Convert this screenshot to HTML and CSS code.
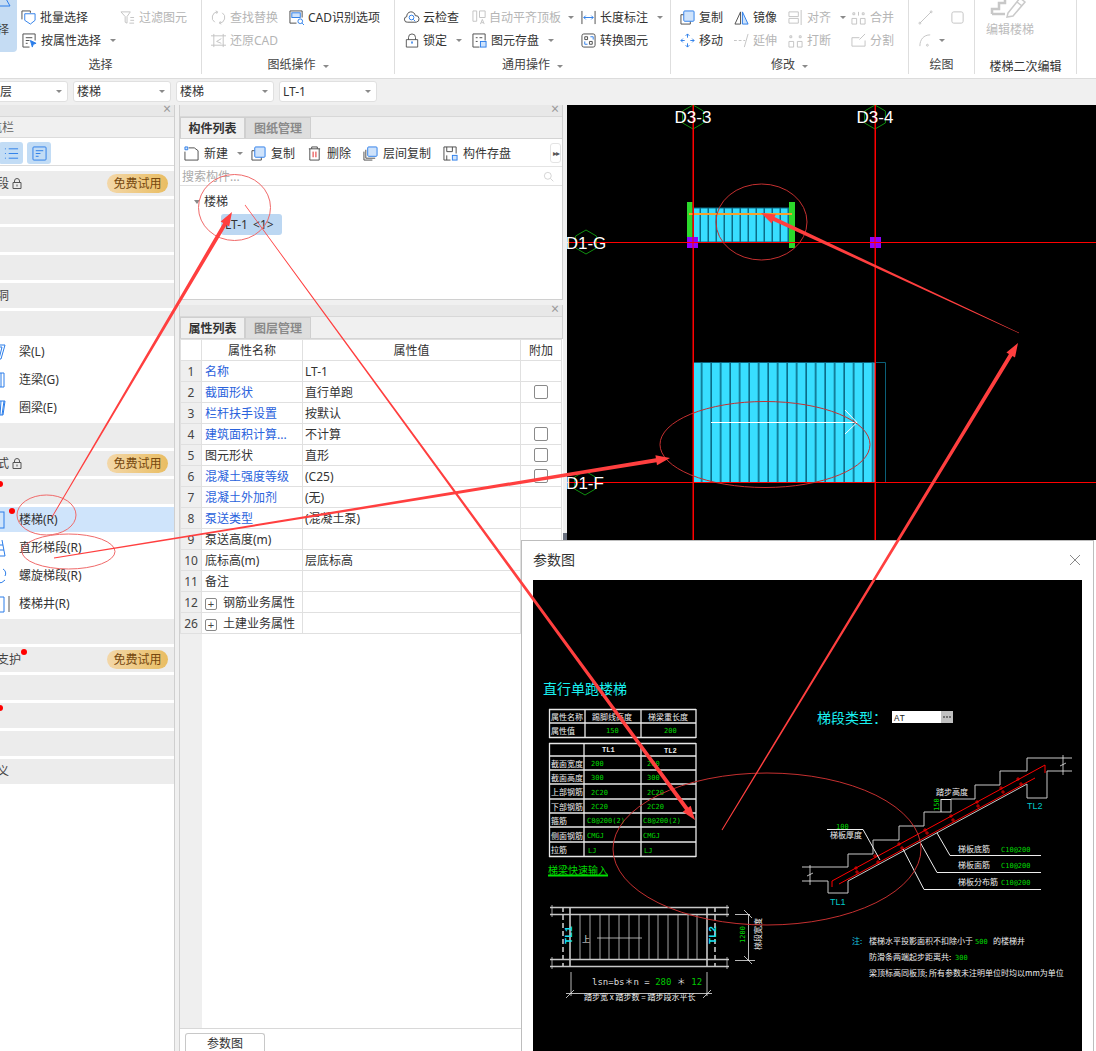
FILE: index.html
```html
<!DOCTYPE html>
<html lang="zh-CN">
<head>
<meta charset="utf-8">
<title>楼梯</title>
<link rel="stylesheet" href="styles.css">
</head>
<body>
<div class="page">

<header class="ribbon">
  <section class="rgroup rgroup--select">
    <div class="rgroup__tools">
      <div class="bigbtn">
        <svg class="bigbtn__ic" viewBox="0 0 24 24"><path class="b" d="M12 1L22 19H2z"/></svg>
        <span>选择</span>
      </div>
      <div class="grid grid--select">
        <div class="tool"><svg class="ic" viewBox="0 0 16 16"><path d="M1 10V1h9v2"/><path class="b" d="M4 4h11v7l-5 4-6-4z"/></svg><span>批量选择</span></div>
        <div class="tool tool--off"><svg class="ic" viewBox="0 0 16 16"><path class="g" d="M1 2h10L7.5 7v7l-2-1V7zM11 8h4M11 11h4M10 14h5"/></svg><span>过滤图元</span></div>
        <div class="tool tool--a2"><svg class="ic" viewBox="0 0 16 16"><path d="M14 8V1H1v14h7M4 5h7M4 8h4M4 11h2"/><path class="b fbs" d="M9 8l6 3-3 1-1 3z"/></svg><span>按属性选择</span><i class="caret"></i></div>
      </div>
    </div>
    <div class="rgroup__label">选择</div>
  </section>

  <section class="rgroup rgroup--cad">
    <div class="rgroup__tools">
      <div class="grid grid--cad">
        <div class="tool tool--off"><svg class="ic" viewBox="0 0 16 16"><path class="g" d="M4 13A6 6 0 0 1 7 2M12 3A6 6 0 0 1 9 14M5 1l2 1-1 2M11 15l-2-1 1-2"/></svg><span>查找替换</span></div>
        <div class="tool"><svg class="ic" viewBox="0 0 16 16"><path d="M8 14H1V1h13v7"/><rect class="bf" x="3" y="3" width="9" height="5"/><circle class="b" cx="12" cy="12" r="2.5"/><path class="b" d="M14 14l2 2"/></svg><span>CAD识别选项</span></div>
        <div class="tool tool--off"><svg class="ic" viewBox="0 0 16 16"><path class="g" d="M3 1v14M13 1v14M0 3h16M0 13h16M11 6L6 9l5 2"/></svg><span>还原CAD</span></div>
      </div>
    </div>
    <div class="rgroup__label">图纸操作<i class="caret"></i></div>
  </section>

  <section class="rgroup rgroup--general">
    <div class="rgroup__tools">
      <div class="grid grid--general">
        <div class="tool"><svg class="ic" viewBox="0 0 16 16"><path d="M4 13a3 3 0 0 1-1-6 4.500 4.500 0 0 1 9-1 3.500 3.500 0 0 1 1 7z"/><circle class="b" cx="8" cy="8" r="2.500"/><path class="b" d="M10 10l2 2"/></svg><span>云检查</span></div>
        <div class="tool tool--off tool--tight"><svg class="ic" viewBox="0 0 16 16"><path class="g" d="M1 1h4v11H1zM8 1h6v7H8zM9 15l2-5 2 5M10 13.500h2"/></svg><span>自动平齐顶板</span><i class="caret"></i></div>
        <div class="tool"><svg class="ic" viewBox="0 0 16 16"><path d="M1 1v14M15 1v14"/><path class="b" d="M3 8h10M5 6L3 8l2 2M11 6l2 2-2 2"/></svg><span>长度标注</span><i class="caret"></i></div>
        <div class="tool tool--a2"><svg class="ic ic--n" viewBox="0 0 16 16"><path d="M4 7V4.500a4 4 0 0 1 8 0V7M1.500 7h13v8.500h-13z"/><path class="b" d="M8 9v3M7 10h2"/></svg><span>锁定</span><i class="caret"></i></div>
        <div class="tool"><svg class="ic" viewBox="0 0 16 16"><path d="M14 8V1H1v14h7M4 5h2M8 5h3M4 9h2"/><rect class="bf" x="9" y="9" width="6" height="6"/></svg><span>图元存盘</span><i class="caret"></i></div>
        <div class="tool"><svg class="ic" viewBox="0 0 16 16"><rect x="1" y="1" width="14" height="14" rx="2"/><path d="M4 4h3v3H4zM9 9h3v3H9z"/><path class="b" d="M10 4h3v3M4 9v3h3"/></svg><span>转换图元</span></div>
      </div>
    </div>
    <div class="rgroup__label">通用操作<i class="caret"></i></div>
  </section>

  <section class="rgroup rgroup--edit">
    <div class="rgroup__tools">
      <div class="grid grid--edit">
        <div class="tool"><svg class="ic" viewBox="0 0 16 16"><path d="M4 5H1v10h10v-3"/><rect class="bf" x="4" y="1" width="11" height="11" rx="1"/></svg><span>复制</span></div>
        <div class="tool"><svg class="ic" viewBox="0 0 16 16"><path d="M7 2L1 15h6z"/><path class="bf" d="M9 2l6 13H9z"/></svg><span>镜像</span></div>
        <div class="tool tool--off"><svg class="ic" viewBox="0 0 16 16"><path class="g" d="M1 2h10v5H1zM1 9h10v5H1zM14 0v16"/></svg><span>对齐</span><i class="caret"></i></div>
        <div class="tool tool--off"><svg class="ic" viewBox="0 0 16 16"><path class="g" d="M1 9h5v6H1zM10 9h5v6h-5zM2 3h2v2H2zM12 3h2v2h-2zM8 2v4"/></svg><span>合并</span></div>
        <div class="tool"><svg class="ic" viewBox="0 0 16 16"><path class="b" d="M8 1v4M8 11v4M1 8h4M11 8h4M6 3l2-2 2 2M6 13l2 2 2-2M3 6L1 8l2 2M13 6l2 2-2 2"/></svg><span>移动</span></div>
        <div class="tool tool--off"><svg class="ic" viewBox="0 0 16 16"><path class="g" d="M0 8h3M5 8h3M10 8h2M11 15l4-14"/></svg><span>延伸</span></div>
        <div class="tool tool--off"><svg class="ic" viewBox="0 0 16 16"><path class="g" d="M1 9h5v6H1zM10 9h5v6h-5zM2 3h2v2H2zM12 3h2v2h-2z"/></svg><span>打断</span></div>
        <div class="tool tool--off"><svg class="ic" viewBox="0 0 16 16"><path class="g" d="M15 8v6H1V5h8M15 1l-6 6"/></svg><span>分割</span></div>
      </div>
    </div>
    <div class="rgroup__label">修改<i class="caret"></i></div>
  </section>

  <section class="rgroup rgroup--draw">
    <div class="rgroup__tools">
      <div class="grid grid--draw">
        <div class="tool tool--off"><svg class="ic" viewBox="0 0 16 16"><path class="g" d="M2 14L14 2"/><circle class="g" cx="2" cy="14" r="1"/><circle class="g" cx="14" cy="2" r="1"/></svg></div>
        <div class="tool tool--off"><svg class="ic" viewBox="0 0 16 16"><rect class="g" x="2" y="2" width="12" height="12" rx="2"/></svg></div>
        <div class="tool tool--off tool--wide"><svg class="ic" viewBox="0 0 16 16"><path class="g" d="M2 14C2 7 6 2 13 2"/><circle class="g" cx="10" cy="13" r="1"/></svg><i class="caret"></i></div>
      </div>
    </div>
    <div class="rgroup__label">绘图</div>
  </section>

  <section class="rgroup rgroup--stair">
    <div class="stair2">
      <svg class="stair2__ic" viewBox="0 0 38 20"><path class="g g2" d="M1 14V9h7V3h6V-2"/><path class="g g2" d="M1 14h13"/><path class="g g1" d="M17 13L29 -2l5 4-12 14-6 1zM26 2l5 4"/></svg>
      <span>编辑楼梯</span>
    </div>
    <div class="rgroup__label rgroup__label--dark">楼梯二次编辑</div>
  </section>
</header>

<nav class="combos">
  <div class="combo combo--first"><span>首层</span><i class="caret"></i></div>
  <div class="combo"><span>楼梯</span><i class="caret"></i></div>
  <div class="combo"><span>楼梯</span><i class="caret"></i></div>
  <div class="combo"><span>LT-1</span><i class="caret"></i></div>
</nav>

<main class="main">
  <aside class="nav">
    <div class="titlebar"><span class="x">×</span></div>
    <div class="nav__head">导航栏</div>
    <div class="nav__tools">
      <div class="tbtn"><svg class="ic" viewBox="0 0 16 16"><path class="b" d="M5 3h10M5 8h10M5 13h10M1 3h1M1 8h1M1 13h1"/></svg></div>
      <div class="tbtn"><svg class="ic" viewBox="0 0 16 16"><rect class="b" x="1" y="1" width="14" height="14" rx="1"/><path class="b" d="M4 5h8M4 8h5M4 11h3"/></svg></div>
    </div>
    <ul class="navlist">
      <li class="sec"><span>施工段</span><svg class="lock" viewBox="0 0 10 11"><path d="M2.500 4.500V3a2.500 2.500 0 0 1 5 0v1.500M1 4.500h8v6H1z"/><path d="M5 6.500v2"/></svg><b class="free">免费试用</b></li>
      <li class="sec"><span>轴线</span></li>
      <li class="sec"><span>柱</span></li>
      <li class="sec"><span>墙</span></li>
      <li class="sec"><span>门窗洞</span></li>
      <li class="sec"><span>梁</span></li>
      <li class="item"><svg class="item__ic" viewBox="0 0 18 18"><path class="b" d="M2 2h15l-4 14h-2l3-12H2"/></svg>梁(L)</li>
      <li class="item"><svg class="item__ic" viewBox="0 0 18 18"><path class="b" d="M2 2h14v14H2M13 2v14"/></svg>连梁(G)</li>
      <li class="item"><svg class="item__ic" viewBox="0 0 18 18"><path class="b" d="M2 2h15l-2 14H2M13 2l-1 14M16 2l-2 14"/></svg>圈梁(E)</li>
      <li class="sec"><span>板</span></li>
      <li class="sec"><span>装配式</span><svg class="lock" viewBox="0 0 10 11"><path d="M2.500 4.500V3a2.500 2.500 0 0 1 5 0v1.500M1 4.500h8v6H1z"/><path d="M5 6.500v2"/></svg><b class="free">免费试用</b></li>
      <li class="sec"><span>楼梯</span><i class="dot dot--a"></i></li>
      <li class="item item--on"><svg class="item__ic" viewBox="0 0 18 18"><rect class="b" x="1" y="1" width="15" height="16"/></svg>楼梯(R)<i class="dot dot--b"></i></li>
      <li class="item"><svg class="item__ic" viewBox="0 0 18 18"><path class="b" d="M14 1l3 16H1M15 6H8M16 11H6"/></svg>直形梯段(R)</li>
      <li class="item"><svg class="item__ic" viewBox="0 0 18 18"><path class="b" d="M15 2a5 5 0 0 1 2 7M17 13a8 8 0 0 1-7 3"/></svg>螺旋梯段(R)</li>
      <li class="item"><svg class="item__ic" viewBox="0 0 18 18"><path class="b" d="M2 2h14v15H2z"/><path class="d" d="M21 1v16"/></svg>楼梯井(R)</li>
      <li class="sec"><span>装修</span></li>
      <li class="sec"><span>基坑支护</span><i class="dot dot--c"></i><b class="free">免费试用</b></li>
      <li class="sec"><span>土方</span></li>
      <li class="sec"><span>基础</span><i class="dot dot--a"></i></li>
      <li class="sec"><span>其它</span></li>
      <li class="sec"><span>自定义</span></li>
    </ul>
  </aside>

  <div class="center">
    <section class="panel panel--list">
      <div class="titlebar"><span class="x">×</span></div>
      <div class="tabs"><div class="tab tab--on">构件列表</div><div class="tab">图纸管理</div></div>
      <div class="ptools">
        <div class="ptool"><svg class="ic" viewBox="0 0 16 16"><path d="M5 2h6l4 3v10H1V6"/><path class="bf" d="M1 1h3v3H1z"/></svg><span>新建</span><i class="caret"></i></div>
        <div class="ptool"><svg class="ic" viewBox="0 0 16 16"><path d="M4 5H1v10h10v-3"/><rect class="bf" x="4" y="1" width="11" height="11" rx="1"/></svg><span>复制</span></div>
        <div class="ptool"><svg class="ic" viewBox="0 0 16 16"><path d="M2 3h12M5 3V1h6v2M3 3v12h10V3"/><path class="r" d="M6.500 6v6M9.500 6v6"/></svg><span>删除</span></div>
        <div class="ptool"><svg class="ic" viewBox="0 0 16 16"><path d="M1 6v9h9M3 4v9h10"/><rect class="bf" x="5" y="1" width="10" height="10" rx="1"/></svg><span>层间复制</span></div>
        <div class="ptool"><svg class="ic" viewBox="0 0 16 16"><path d="M8 15H1V1h13v7M4 1v5h6V1M4 15v-5"/><rect class="bf" x="10" y="10" width="5" height="5"/></svg><span>构件存盘</span></div>
        <div class="more">▸▸</div>
      </div>
      <div class="search"><span>搜索构件...</span><svg class="ic ic--s" viewBox="0 0 16 16"><circle class="g" cx="7" cy="7" r="5"/><path class="g" d="M11 11l4 4"/></svg></div>
      <div class="tree">
        <div class="tree__root"><i class="tree__arrow"></i>楼梯</div>
        <div class="chip">LT-1 &lt;1&gt;</div>
      </div>
    </section>

    <section class="panel panel--props">
      <div class="titlebar"><span class="x">×</span></div>
      <div class="tabs"><div class="tab tab--on">属性列表</div><div class="tab">图层管理</div></div>
      <div class="propwrap">
        <table class="props">
          <colgroup><col class="c1"><col class="c2"><col class="c3"><col class="c4"></colgroup>
          <thead><tr><th></th><th>属性名称</th><th>属性值</th><th>附加</th></tr></thead>
          <tbody>
            <tr><td class="n">1</td><td class="l">名称</td><td>LT-1</td><td></td></tr>
            <tr><td class="n">2</td><td class="l">截面形状</td><td>直行单跑</td><td class="k"><i class="check"></i></td></tr>
            <tr><td class="n">3</td><td class="l">栏杆扶手设置</td><td>按默认</td><td></td></tr>
            <tr><td class="n">4</td><td class="l">建筑面积计算...</td><td>不计算</td><td class="k"><i class="check"></i></td></tr>
            <tr><td class="n">5</td><td>图元形状</td><td>直形</td><td class="k"><i class="check"></i></td></tr>
            <tr><td class="n">6</td><td class="l">混凝土强度等级</td><td>(C25)</td><td class="k"><i class="check"></i></td></tr>
            <tr><td class="n">7</td><td class="l">混凝土外加剂</td><td>(无)</td><td></td></tr>
            <tr><td class="n">8</td><td class="l">泵送类型</td><td>(混凝土泵)</td><td></td></tr>
            <tr><td class="n">9</td><td>泵送高度(m)</td><td></td><td></td></tr>
            <tr><td class="n">10</td><td>底标高(m)</td><td>层底标高</td><td></td></tr>
            <tr><td class="n">11</td><td>备注</td><td></td><td></td></tr>
            <tr><td class="n">12</td><td><i class="plus">+</i>钢筋业务属性</td><td></td><td></td></tr>
            <tr><td class="n">26</td><td><i class="plus">+</i>土建业务属性</td><td></td><td></td></tr>
          </tbody>
        </table>
      </div>
      <div class="btabs"><div class="btab">参数图</div></div>
    </section>
  </div>

  <div class="canvas">
    <svg class="cad" viewBox="567 105 529 435" width="529" height="435">
      <defs>
        <pattern id="treadS" x="693" y="0" width="8" height="10" patternUnits="userSpaceOnUse"><rect width="8" height="10" fill="#38deff"/><rect x="6.500" width="1.500" height="10" fill="#0a6c88"/></pattern>
        <pattern id="treadB" x="693" y="0" width="9.500" height="10" patternUnits="userSpaceOnUse"><rect width="9.500" height="10" fill="#38deff"/><rect x="7.900" width="1.600" height="10" fill="#0a6c88"/></pattern>
        <polygon id="hex" points="0,-12 10.400,-6 10.400,6 0,12 -10.400,6 -10.400,-6"/>
      </defs>
      <g class="hexes">
        <use href="#hex" x="693" y="117"/><use href="#hex" x="875" y="117"/><use href="#hex" x="586" y="242"/><use href="#hex" x="585" y="483"/>
      </g>
      <rect x="693" y="208" width="96" height="34" fill="url(#treadS)" stroke="#0a6c88"/>
      <rect x="693" y="362" width="182" height="120" fill="url(#treadB)"/>
      <path d="M693 362.500H885.500V482" fill="none" stroke="#0b5f78"/>
      <rect x="687" y="202" width="5.500" height="46" fill="#2bd92b"/>
      <rect x="789" y="202" width="6" height="46" fill="#2bd92b"/>
      <path d="M689 214H792" stroke="#f5a02c" stroke-width="2"/>
      <path d="M711 422.500H857M845 410L857 422.500L845 434" fill="none" stroke="#fff" stroke-width="1"/>
      <rect x="692.500" y="105" width="1.500" height="435" fill="#f00"/>
      <rect x="874.500" y="105" width="1.500" height="435" fill="#f00"/>
      <rect x="567" y="242" width="529" height="1" fill="#f00"/>
      <rect x="567" y="482" width="529" height="1" fill="#f00"/>
      <rect x="687" y="237" width="11" height="11" fill="#9000ff"/><rect x="870" y="237" width="11" height="11" fill="#9000ff"/>
      <path d="M693 237V248M875 237V248M687 242.500H698M870 242.500H881" stroke="#f00"/>
      <text class="axis" x="693" y="123" text-anchor="middle">D3-3</text>
      <text class="axis" x="875" y="123" text-anchor="middle">D3-4</text>
      <text class="axis" x="586" y="249" text-anchor="middle">D1-G</text>
      <text class="axis" x="585" y="489" text-anchor="middle">D1-F</text>
    </svg>
  </div>
</main>

<div class="thumb"></div>

<section class="dialog">
  <header class="dialog__head"><span>参数图</span><svg class="dialog__x" viewBox="0 0 12 12"><path d="M1 1l10 10M11 1L1 11"/></svg></header>
  <svg class="param" viewBox="533 580 549 471" width="549" height="471">
    <text class="ttl" x="543" y="694">直行单跑楼梯</text>

    <g class="tb">
      <path d="M549 709.500H696M549 723H696M549 737.500H696M549.500 709V738M585 709V738M641 709V738M696 709V738"/>
      <path d="M549 743.500H696M549 756H696M549 770H696M549 784H696M549 799H696M549 813H696M549 827H696M549 842H696M549 856.500H696M549.500 743V857M584 743V857M641 743V857M696 743V857"/>
    </g>
    <g class="cw">
      <text x="551" y="720">属性名称</text><text x="592" y="720">踢脚线高度</text><text x="648" y="720">梯梁重长度</text>
      <text x="551" y="734">属性值</text>
      <text x="551" y="767">截面宽度</text><text x="551" y="781">截面高度</text><text x="551" y="795">上部钢筋</text><text x="551" y="810">下部钢筋</text><text x="551" y="824">箍筋</text><text x="551" y="839">侧面钢筋</text><text x="551" y="853">拉筋</text>
    </g>
    <g class="mw"><text x="602" y="752">TL1</text><text x="664" y="753">TL2</text></g>
    <g class="mg">
      <text x="606" y="733">150</text><text x="664" y="733">200</text>
      <text x="591" y="766">200</text><text x="647" y="766">200</text>
      <text x="591" y="780">300</text><text x="647" y="780">300</text>
      <text x="591" y="795">2C20</text><text x="647" y="795">2C20</text>
      <text x="591" y="809">2C20</text><text x="647" y="809">2C20</text>
      <text x="587" y="823">C8@200(2)</text><text x="643" y="823">C8@200(2)</text>
      <text x="587" y="838">CMGJ</text><text x="643" y="838">CMGJ</text>
      <text x="588" y="853">LJ</text><text x="644" y="853">LJ</text>
    </g>
    <text class="link" x="548" y="874">梯梁快速输入</text>
    <path d="M548 875.500H608" stroke="#00e000" stroke-width="2"/>

    <g class="pl">
      <path d="M550 907.500H729M550 914.500H729M550 959.500H729M550 966.500H729M570 907V967M707 907V967"/>
      <path stroke-dasharray="5 3" d="M563 907V967M715 907V967"/>
    </g>
    <path class="thin" d="M580 914V959M590 914V959M600 914V959M609 914V959M619 914V959M629 914V959M639 914V959M649 914V959M658 914V959M668 914V959M678 914V959M688 914V959M697 914V959M597 938H642M552 905V917M727 905V917M552 957V969M727 957V969"/>
    <g class="thin2"><path d="M735 914.500H750M735 960.500H755M748.500 914V961M744 910l8 8M744 956l8 8M571 972V996M707 972V996M566 993.500H712M566 998l8-8M703 998l8-8"/></g>
    <text class="cw1" x="582" y="942">上</text>
    <text class="tl" transform="translate(572 944) rotate(-90)">TL1</text>
    <text class="tl" transform="translate(716 944) rotate(-90)">TL2</text>
    <text class="mg mg1" transform="translate(745 943) rotate(-90)">1200</text>
    <text class="cw1" transform="translate(761 950) rotate(-90)">梯段宽度</text>
    <text class="formula" x="592" y="985">lsn=bs＊n = <tspan class="fg">280</tspan> ＊ <tspan class="fg">12</tspan></text>
    <text class="cw1" x="584" y="1000">踏步宽 x 踏步数 = 踏步段水平长</text>

    <text class="ttl" x="817" y="723">梯段类型：</text>
    <rect x="892" y="711" width="61" height="12" fill="#fff"/>
    <rect x="941" y="711" width="12" height="12" fill="#c0c0c0"/>
    <text class="mono" x="894" y="721">AT</text>
    <path d="M943.500 717h1M946.500 717h1M949.500 717h1" stroke="#222" stroke-width="2"/>

    <path class="stairline" d="M802 867H848V854H873V840H899V826H924V812H951V799H975V785H1000V771H1027V758H1072M802 881H828V893H848V881L1027 784V798H1047V771H1072"/>
    <path class="thin2" d="M810 865V885M1063 755V775M807 876l6-3M1060 766l6-3"/>
    <path class="rebar" d="M832 887V881L1045 765V773M839 884L1035 778"/>
    <path class="rebar rebar--s" d="M854 868h4M856 866v4M873 856h4M875 854v4M897 844h4M899 842v4M923 830h4M925 828v4M949 816h4M951 814v4M975 802h4M977 800v4M999 788h4M1001 786v4M1016 779h4M1018 777v4M855 872h4M857 870v4M876 862h4M878 860v4M900 848h4M902 846v4M925 833h4M927 831v4M951 820h4M953 818v4M976 806h4M978 804v4M1001 792h4M1003 790v4M1019 784h4M1021 782v4"/>
    <path class="lead" d="M827 829.500H863L880 860M937 833L950 855.500H1041M920 842L937 872.500H1041M903 849L924 889.500H1041M941 799.500H951M941 799V812"/>
    <g class="cw">
      <text x="936" y="795">踏步高度</text><text x="830" y="838">梯板厚度</text>
      <text x="958" y="852">梯板底筋</text><text x="958" y="868">梯板面筋</text><text x="958" y="885">梯板分布筋</text>
      <text x="869" y="944">楼梯水平投影面积不扣除小于</text><text x="993" y="944">的楼梯井</text>
      <text x="869" y="960">防滑条两端起步距离共:</text>
      <text x="869" y="976">梁顶标高同板顶;  所有参数未注明单位时均以mm为单位</text>
    </g>
    <g class="mg">
      <text x="836" y="829">100</text>
      <text transform="translate(939 811) rotate(-90)">150</text>
      <text x="1001" y="852">C10@200</text><text x="1001" y="868">C10@200</text><text x="1001" y="885">C10@200</text>
      <text x="975" y="944">500</text><text x="955" y="960">300</text>
    </g>
    <g class="tlc"><text x="830" y="905">TL1</text><text x="1027" y="809">TL2</text></g>
    <text class="note" x="852" y="944">注:</text>
  </svg>
</section>

<svg class="marks" viewBox="0 0 1096 1051" width="1096" height="1051" aria-hidden="true">
  <g class="rings">
    <ellipse cx="234.500" cy="207.500" rx="36" ry="33"/>
    <ellipse cx="46.500" cy="515" rx="29.500" ry="20"/>
    <ellipse cx="68.500" cy="551.500" rx="46.500" ry="17.500"/>
    <ellipse class="dark" cx="761.500" cy="222" rx="45.500" ry="38"/>
    <ellipse class="dark" cx="765" cy="444.500" rx="105" ry="43"/>
    <ellipse class="dark" cx="767" cy="849" rx="154" ry="76"/>
  </g>
  <g class="arrows">
    <polygon points="52.340,517.200 226.600,225.070 229.200,226.600 232,212 220.600,221.500 223.200,223.030 51.660,516.800"/>
    <polygon points="54.060,558.390 656.500,462.200 657,465.200 670,458 655.400,455.300 655.900,458.300 53.940,557.600"/>
    <polygon points="244.760,205.180 685.100,809.900 682.700,811.650 695,820 690.700,805.750 688.300,807.500 245.240,204.820"/>
    <polygon points="722.430,830.260 1012.400,356 1015,357.600 1018,343 1006.400,352.400 1009,354 721.570,829.740"/>
    <polygon points="1019.080,332.820 774.500,217.100 775.800,214.400 761,213 771.600,223.400 772.900,220.700 1018.920,333.180"/>
  </g>
</svg>

</div>
</body>
</html>
```

FILE: styles.css
```css
* { box-sizing: border-box; }
html, body { margin: 0; padding: 0; }
body { background: #f0f0f0; }
.page {
  position: relative;
  width: 1096px;
  height: 1051px;
  overflow: hidden;
  background: #f0f0f0;
  color: #333;
  font: 12px/18px "Noto Sans", "Noto Sans CJK SC", sans-serif;
}
ul { list-style: none; margin: 0; padding: 0; }

/* shared icon strokes */
.ic { width: 15px; height: 15px; flex: none; fill: none; stroke: #4a4a4a; stroke-width: 1; overflow: visible; }
.ic--n { width: 14px; }
.ic--s { width: 11px; height: 11px; }
.b { fill: none; stroke: #2b7de9; stroke-width: 1; }
.g { fill: none; stroke: #c2c2c2; stroke-width: 1; }
.g1 { stroke-width: 1.500; stroke: #cacaca; }
.g2 { stroke-width: 2.500; stroke: #c8c8c8; }
.d { stroke: #555; fill: none; }
.r { stroke: #e02020; fill: none; }
.bf { fill: #cfe3fb; stroke: #2b7de9; stroke-width: 1; }
.fbs { fill: #2b7de9; }
.caret {
  display: inline-block;
  width: 0;
  height: 0;
  margin-left: 6px;
  border-style: solid;
  border-width: 3px 3px 0;
  border-color: #8a8a8a transparent transparent;
  flex: none;
}

/* ribbon */
.ribbon { display: flex; align-items: flex-start; height: 79px; background: #fff; border-bottom: 1px solid #dcdcdc; }
.rgroup { display: flex; flex-direction: column; height: 74px; border-right: 1px solid #dedede; flex: none; }
.rgroup__tools { display: flex; height: 52px; flex: none; }
.rgroup__label { display: flex; justify-content: center; align-items: center; flex: none; height: 26px; line-height: 26px; color: #444; }
.rgroup__label .caret { margin-top: 2px; margin-left: 7px; }
.rgroup__label--dark { color: #333; margin-top: 2px; }
.rgroup--select { width: 202px; }
.rgroup--cad { width: 193px; }
.rgroup--general { width: 276px; }
.rgroup--edit { width: 238px; }
.rgroup--draw { width: 66px; }
.rgroup--stair { width: 102px; align-items: center; }

.bigbtn {
  flex: none;
  width: 47px;
  height: 52px;
  margin: 0 4px 0 -30px;
  padding-right: 8px;
  background: #c5dcf3;
  border-radius: 0 0 4px 4px;
  text-align: right;
  color: #444;
}
.bigbtn__ic { display: block; width: 24px; height: 24px; margin: -13px 0 10px 18px; overflow: visible; }
.bigbtn span { display: block; margin-top: 10px; }

.grid { display: grid; grid-auto-rows: 23px; padding-top: 6px; }
.grid--select { grid-template-columns: 99px 82px; }
.grid--cad { grid-template-columns: 78px 100px; padding-left: 9px; }
.grid--general { grid-template-columns: 68px 109px 90px; padding-left: 9px; }
.grid--edit { grid-template-columns: 54px 54px 63px 60px; padding-left: 9px; }
.grid--draw { grid-template-columns: 32px 30px; padding-left: 9px; }
.tool { display: flex; align-items: center; gap: 4px; white-space: nowrap; color: #333; }
.tool .caret { margin-left: 5px; }
.tool--off { color: #b5b5b5; }
.tool--a2 { padding-left: 1px; }
.tool--tight { gap: 2px; }
.tool--wide .caret { margin-left: 2px; }

.stair2 { display: flex; flex-direction: column; align-items: center; align-self: flex-start; width: 48px; height: 52px; margin-left: 11px; flex: none; color: #bcbcbc; }
.stair2__ic { display: block; width: 38px; height: 20px; overflow: visible; margin-bottom: 1px; }
.stair2 span { line-height: 18px; }

/* combos */
.combos { display: flex; gap: 5px; height: 26px; padding-top: 2px; background: #f0f0f0; }
.combo {
  display: flex;
  align-items: center;
  justify-content: space-between;
  width: 98px;
  height: 21px;
  padding: 0 5px 0 3px;
  background: #fff;
  border: 1px solid #e0e0e0;
  border-radius: 3px;
  color: #333;
}
.combo--first { margin-left: -30px; padding-left: 17px; }

/* main */
.main { display: flex; height: 946px; }
.titlebar { position: relative; height: 12px; background: #e8e8e8; border-bottom: 1px solid #d8d8d8; }
.x { position: absolute; right: 3px; top: -4px; color: #9a9a9a; font-size: 14px; line-height: 16px; }

/* navigation */
.nav {
  flex: none;
  width: 235px;
  margin-left: -60px;
  background: #fff;
  border-right: 1px solid #cfcfcf;
  height: 946px;
}
.nav__head { height: 21px; padding-left: 38px; background: #f0f0f0; line-height: 21px; color: #666; border-bottom: 1px solid #dcdcdc; }
.nav__tools { display: flex; gap: 4px; height: 28px; padding: 4px 0 0 59px; border-bottom: 1px solid #dcdcdc; }
.tbtn { display: flex; align-items: center; justify-content: center; width: 24px; height: 22px; background: #c2dcf5; border-radius: 3px; }
.navlist { padding-top: 5px; }
.sec, .item { position: relative; display: flex; align-items: center; height: 25px; margin-bottom: 3px; }
.sec { background: #ececec; padding-left: 33px; color: #444; }
.item { padding-left: 79px; color: #333; }
.item--on { background: #cfe4fb; }
.item__ic { position: absolute; left: 48px; top: 4px; width: 18px; height: 18px; fill: none; overflow: visible; }
.lock { width: 10px; height: 11px; margin-left: 3px; fill: none; stroke: #555; stroke-width: 1; }
.free {
  position: absolute;
  left: 167px;
  top: 3px;
  width: 61px;
  height: 19px;
  border-radius: 10px;
  background: linear-gradient(90deg, #f3d7a8, #e9bd62);
  color: #75470e;
  font-weight: 400;
  line-height: 19px;
  text-align: center;
}
.dot { position: absolute; width: 6px; height: 6px; border-radius: 50%; background: #f00; }
.dot--a { left: 57px; top: 2px; }
.dot--b { left: 69px; top: 1px; }
.dot--c { left: 81px; top: 2px; }

/* center */
.center { display: flex; flex-direction: column; flex: none; width: 384px; margin-left: 4px; gap: 5px; }
.panel { background: #fff; border: 1px solid #d0d0d0; border-top: 0; }
.panel--list { height: 195px; }
.panel--props { height: 746px; border-bottom: 0; display: flex; flex-direction: column; }
.tabs { display: flex; height: 22px; background: #f0f0f0; border-bottom: 1px solid #d4d4d4; flex: none; }
.tab { width: 66px; background: #dedede; border: 1px solid #cfcfcf; border-bottom: 0; line-height: 21px; text-align: center; color: #8a8a8a; font-weight: 600; }
.tab--on { background: #f0f0f0; color: #333; width: 65px; }
.ptools { position: relative; display: flex; align-items: center; height: 28px; padding: 2px 0 0 4px; border-bottom: 1px solid #e4e4e4; }
.ptool { display: flex; align-items: center; gap: 5px; margin-right: 12px; white-space: nowrap; }
.ptool .caret { margin-left: 4px; margin-right: -4px; }
.more { position: absolute; right: 1px; top: 4px; width: 11px; height: 20px; border: 1px solid #e4e4e4; border-radius: 3px; font-size: 8px; line-height: 18px; text-align: center; color: #555; letter-spacing: -1px; }
.search { display: flex; align-items: center; justify-content: space-between; height: 19px; padding: 1px 8px 0 2px; border-bottom: 1px solid #e0e0e0; color: #aaa; }
.tree { padding: 6px 0 0 14px; }
.tree__root { display: flex; align-items: center; gap: 4px; height: 19px; color: #333; }
.tree__arrow { width: 0; height: 0; border-style: solid; border-width: 4px 3px 0; border-color: #888 transparent transparent; }
.chip { width: 61px; height: 21px; margin: 3px 0 0 27px; padding-left: 4px; background: #bcd7f2; border-radius: 3px; line-height: 21px; white-space: pre; word-spacing: 2px; }

.propwrap { flex: 1; background: linear-gradient(90deg, #efefef 22px, #fff 22px); border-bottom: 1px solid #d8d8d8; margin-right: -1px; }
.props { width: 381px; border-collapse: collapse; table-layout: fixed; }
.c1 { width: 21px; } .c2 { width: 101px; } .c3 { width: 218px; } .c4 { width: 41px; }
.props th, .props td { height: 21px; padding: 0 0 0 3px; border: 1px solid #e0e0e0; font-weight: 400; line-height: 19px; white-space: nowrap; overflow: hidden; }
.props th { text-align: center; padding: 1px 0 0; background: #fff; }
.props td:nth-child(3) { padding-left: 2px; }
.n { text-align: center; background: #efefef; padding: 0 !important; color: #444; }
.l { color: #2a62dc; }
.k { text-align: center; padding: 0 !important; line-height: 0 !important; }
.check { display: inline-block; width: 14px; height: 14px; vertical-align: middle; border: 1px solid #8a8a8a; border-radius: 2px; background: #fff; }
.plus { display: inline-block; width: 12px; height: 12px; margin: 0 6px 0 0; border: 1px solid #888; border-radius: 2px; font: 11px/10px "Liberation Sans", sans-serif; text-align: center; vertical-align: -1px; color: #444; }
.btabs { height: 22px; padding: 4px 0 0 5px; background: #fff; }
.btab { width: 80px; height: 22px; border: 1px solid #c8c8c8; border-bottom: 0; border-radius: 3px 3px 0 0; text-align: center; line-height: 20px; }

/* canvas */
.canvas { flex: 1; margin-left: 4px; background: #fff; }
.cad { display: block; background: #000; }
.hexes { fill: none; stroke: #0f8f0f; stroke-width: 1; }
.axis { fill: #fff; font: 17px "Liberation Sans", sans-serif; }
.thumb { position: absolute; left: 563px; top: 533px; width: 4px; height: 8px; background: #6b7280; }

/* dialog */
.dialog { position: absolute; left: 521px; top: 540px; width: 573px; height: 511px; padding: 0 11px; background: #fff; border: 1px solid #bdbdbd; border-bottom: 0; }
.dialog__head { display: flex; align-items: flex-start; justify-content: space-between; height: 39px; padding: 10px 1px 0 0; font-size: 14px; color: #333; }
.dialog__x { width: 12px; height: 12px; margin-top: 3px; fill: none; stroke: #8a8a8a; stroke-width: 1; }
.param { display: block; background: #000; }
.ttl { fill: #19f0f0; font: 14px "Noto Sans CJK SC", sans-serif; }
.tb path { fill: none; stroke: #e8e8e8; stroke-width: 1.300; }
.cw text, .cw1 { fill: #eee; font: 8px "Noto Sans CJK SC", sans-serif; }
.mw text { fill: #eee; font: 700 7px "Liberation Mono", monospace; }
.mg text, .mg1 { fill: #00d800; font: 7px "DejaVu Sans Mono", monospace; }
.link { fill: #00d800; font: 10px "Noto Sans CJK SC", sans-serif; }
.pl path { fill: none; stroke: #c8c8c8; stroke-width: 1.600; }
.thin { fill: none; stroke: #cfcfcf; stroke-width: 0.800; }
.thin2 path, path.thin2 { fill: none; stroke: #e6e6e6; stroke-width: 0.800; }
.tl { fill: #19e0f0; font: 700 10px "Liberation Mono", monospace; }
.formula { fill: #ddd; font: 9px "DejaVu Sans Mono", "Noto Sans CJK SC", monospace; }
.fg { fill: #00c800; }
.mono { fill: #222; font: 9px "Liberation Mono", monospace; }
.stairline { fill: none; stroke: #c8c8c8; stroke-width: 1; }
.rebar { fill: none; stroke: #f00; stroke-width: 1; }
.rebar--s { stroke-width: 0.800; }
.lead { fill: none; stroke: #eee; stroke-width: 1; }
.tlc text { fill: #00c8c8; font: 9px "Liberation Sans", sans-serif; }
.note { fill: #19c8e0; font: 8px "Noto Sans CJK SC", sans-serif; }

/* red hand annotations */
.marks { position: absolute; left: 0; top: 0; pointer-events: none; }
.rings { fill: none; stroke: #f06a6a; stroke-width: 1; }
.rings .dark { stroke: #c53030; }
.arrows { fill: #ff3f3f; }
```
